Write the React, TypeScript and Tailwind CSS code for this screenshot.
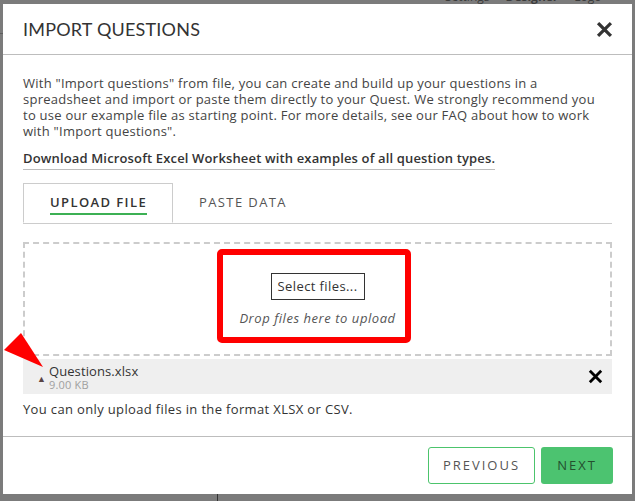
import { useState } from "react";

function CloseIcon({ className }: { className?: string }) {
  return (
    <svg viewBox="0 0 16 16" className={className} fill="none" stroke="currentColor" strokeWidth={3} strokeLinecap="square">
      <path d="M3 3 L13 13 M13 3 L3 13" />
    </svg>
  );
}

export default function App() {
  const [tab, setTab] = useState<"upload" | "paste">("upload");

  return (
    <div
      className="relative h-[501px] w-[635px] overflow-hidden bg-[#7b7b7b] pl-[3px] pt-[4px]"
      style={{ fontFamily: '"Open Sans", "Liberation Sans", sans-serif' }}
    >
      {/* bits of the page behind the overlay */}
      <div className="absolute left-[445px] top-[-11px] flex gap-4 text-[12px] leading-4 text-[#3c3c3c]">
        <span>Settings</span>
        <span className="font-bold">Designer</span>
        <span>Logo</span>
      </div>
      <div className="absolute left-0 top-[33px] h-px w-[3px] bg-[#5e5e5e]" />
      <div className="absolute bottom-0 left-[217px] h-[7px] w-px bg-[#333]" />

      <div className="relative flex h-[490px] w-[629px] flex-col bg-white">
        <div className="flex h-[51px] items-center justify-between border-b border-[#bdbdbd] pl-5 pr-[19px]">
          <h1 className="text-[18px] tracking-[0.2px] text-[#333]" style={{ fontFamily: "Lato, sans-serif" }}>
            IMPORT QUESTIONS
          </h1>
          <CloseIcon className="h-[17px] w-[17px] text-[#333]" />
        </div>

        <div className="flex-1 px-5 pt-5">
          <p className="pr-2 text-[13px] leading-4 tracking-[0.25px] text-[#444]">
            With "Import questions" from file, you can create and build up your questions in a spreadsheet and import or
            paste them directly to your Quest. We strongly recommend you to use our example file as starting point. For
            more details, see our FAQ about how to work with "Import questions".
          </p>
          <a className="mt-[11px] inline-block border-b border-[#bdbdbd] pb-[3px] text-[13px] font-semibold leading-4 tracking-[0.15px] text-[#333]">
            Download Microsoft Excel Worksheet with examples of all question types.
          </a>

          <div className="mt-[13px] flex border-b border-[#ccc]">
            <button
              onClick={() => setTab("upload")}
              className={`-mb-px flex h-10 w-[150px] items-center pl-[26px] text-[13px] font-semibold uppercase tracking-[1.4px] ${
                tab === "upload" ? "border border-[#ccc] border-b-white bg-white text-[#333]" : "text-[#555]"
              }`}
            >
              <span className={tab === "upload" ? "border-b-2 border-[#3cb054] pt-[2px]" : ""}>Upload File</span>
            </button>
            <button
              onClick={() => setTab("paste")}
              className="flex h-10 items-center pl-[26px] text-[13px] uppercase tracking-[1.4px] text-[#555]"
            >
              Paste Data
            </button>
          </div>

          <div className="relative mt-[18px] flex flex-col items-center border-2 border-dashed border-[#cccccc] pb-[28px] pt-[29px]">
            <button className="h-[27px] w-[94px] border border-[#333] text-[13px] tracking-[0.4px] text-[#333]">
              Select files...
            </button>
            <span className="mt-[10px] text-[13px] italic leading-4 tracking-[0.55px] text-[#555]">Drop files here to upload</span>
            <div className="absolute left-[192px] top-[5px] h-[94px] w-[194px] rounded-[5px] border-[6px] border-[#ff0000]" />
          </div>

          <div className="mt-[3px] flex h-[35px] items-center bg-[#efefef] pl-[14px] pr-[9px]">
            <span className="mt-[4px] text-[9px] text-[#5a4444]">▲</span>
            <div className="ml-[3px] flex flex-col">
              <span className="text-[13px] leading-[14px] tracking-[0.1px] text-[#333]">Questions.xlsx</span>
              <span className="mt-[1px] text-[11px] leading-[11px] tracking-[0.2px] text-[#a0a0a0]">9.00 KB</span>
            </div>
            <CloseIcon className="ml-auto h-[15px] w-[15px] text-black" />
          </div>

          <p className="mt-[7px] text-[13px] leading-4 tracking-[0.35px] text-[#333]">
            You can only upload files in the format XLSX or CSV.
          </p>
        </div>

        <div className="flex justify-end gap-[6px] border-t border-[#bdbdbd] pb-[10px] pr-[19px] pt-[10px]">
          <button className="h-[37px] w-[107px] rounded-[3px] border border-[#4cc46c] text-[13px] tracking-[2px] text-[#555]">
            PREVIOUS
          </button>
          <button className="h-[37px] w-[72px] rounded-[3px] bg-[#4cc370] text-[13px] tracking-[2px] text-[#24502f]">
            NEXT
          </button>
        </div>
      </div>

      {/* red annotation arrow */}
      <svg className="absolute left-[4px] top-[332px] h-[37px] w-[40px]" viewBox="0 0 40 37">
        <polygon points="0,18 17,1 39,35" fill="#ff0000" />
      </svg>
    </div>
  );
}
